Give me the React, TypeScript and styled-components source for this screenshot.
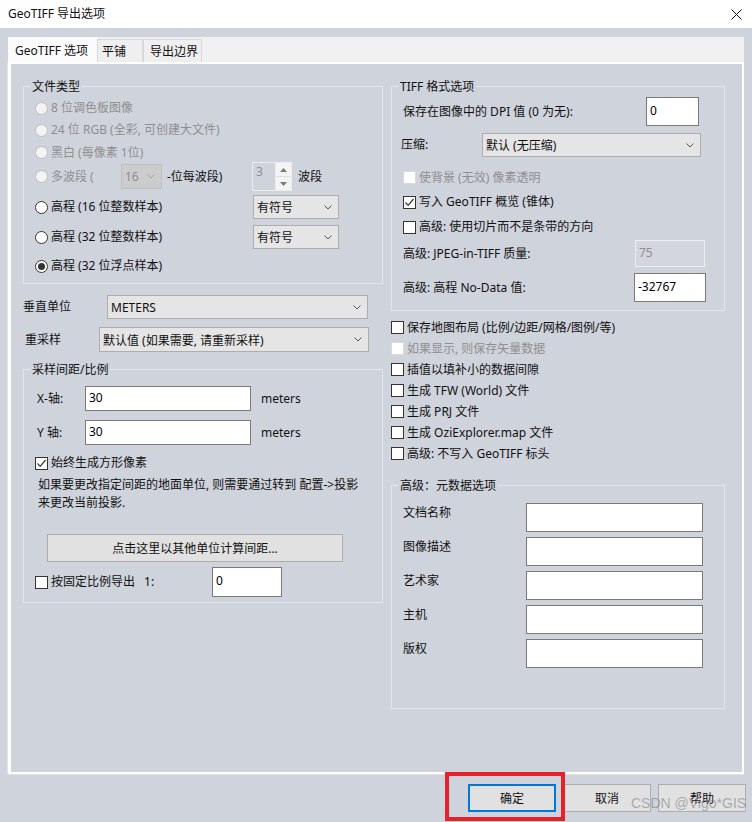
import React from 'react';
import styled, { createGlobalStyle } from 'styled-components';

const BG = '#cfd3dc';

const GlobalStyle = createGlobalStyle`
  html, body { margin: 0; padding: 0; background: ${BG}; }
  body {
    font-family: "Noto Sans", "Noto Sans CJK SC", sans-serif;
    font-size: 12px;
    color: #111;
  }
  * { box-sizing: border-box; }
`;

const Window = styled.div`
  position: relative;
  width: 752px;
  height: 822px;
  background: ${BG};
  display: flex;
  flex-direction: column;
  overflow: hidden;
`;
const TitleBar = styled.div`
  height: 28px;
  flex-shrink: 0;
  background: #fff;
  display: flex;
  align-items: center;
  justify-content: space-between;
  padding: 0 10px 0 8px;
  line-height: 16px;
`;
const Body = styled.div`
  padding: 9px 8px 0 8px;
`;
const TabStrip = styled.div`
  height: 25px;
  display: flex;
  align-items: flex-end;
  background: #f0f0f0;
`;
const Tab = styled.div<{ $w: number; $pl: number; $active?: boolean }>`
  width: ${p => p.$w}px;
  height: ${p => (p.$active ? 25 : 23)}px;
  padding-left: ${p => p.$pl}px;
  display: flex;
  align-items: center;
  background: ${p => (p.$active ? '#fbfbfb' : '#efefef')};
  border: ${p => (p.$active ? 'none' : '1px solid #d9d9d9')};
  border-bottom: none;
  white-space: nowrap;
`;
const Page = styled.div`
  height: 712px;
  border: 2px solid #fff;
  border-left-width: 3px;
  box-shadow: 0 1px 0 #e2e2e2, -1px 0 0 #e2e2e2;
  display: grid;
  grid-template-columns: 360px 334px;
  column-gap: 8px;
  align-items: start;
  padding: 22px 0 0 12px;
`;
const Column = styled.div`
  display: flex;
  flex-direction: column;
`;
const Group = styled.div<{ $mt?: number; $pb?: number }>`
  display: flex;
  flex-direction: column;
  border: 1px solid #e4e6eb;
  margin-top: ${p => p.$mt ?? 0}px;
  padding: 0 0 ${p => p.$pb ?? 0}px 11px;
`;
const Legend = styled.div`
  align-self: flex-start;
  margin: -9px 0 0 -5px;
  padding: 0 2px;
  line-height: 18px;
  background: ${BG};
  white-space: nowrap;
`;
const Row = styled.div<{ $h?: number; $mt?: number; $ml?: number; $top?: boolean }>`
  display: flex;
  align-items: ${p => (p.$top ? 'flex-start' : 'center')};
  flex-shrink: 0;
  height: ${p => (p.$h ? `${p.$h}px` : 'auto')};
  margin-top: ${p => p.$mt ?? 0}px;
  margin-left: ${p => p.$ml ?? 0}px;
  white-space: nowrap;
`;
const Cell = styled.span<{ $w?: number; $ml?: number; $off?: boolean; $lh?: number }>`
  display: inline-flex;
  align-items: center;
  flex-shrink: 0;
  width: ${p => (p.$w ? `${p.$w}px` : 'auto')};
  margin-left: ${p => p.$ml ?? 0}px;
  color: ${p => (p.$off ? '#8f8f8f' : '#111')};
  line-height: ${p => p.$lh ?? 16}px;
`;
const RadioDot = styled.span<{ $on?: boolean; $off?: boolean }>`
  width: 13px;
  height: 13px;
  border-radius: 50%;
  border: 1px solid ${p => (p.$off ? '#bdbdbd' : '#333')};
  background: ${p => (p.$off ? '#f3f3f3' : '#fff')};
  display: inline-flex;
  align-items: center;
  justify-content: center;
  margin-right: 3px;
  flex-shrink: 0;
  &::after {
    content: '';
    display: ${p => (p.$on ? 'block' : 'none')};
    width: 7px;
    height: 7px;
    border-radius: 50%;
    background: #333;
  }
`;
const CheckBox = styled.span<{ $off?: boolean }>`
  width: 13px;
  height: 13px;
  border: 1px solid ${p => (p.$off ? '#dadada' : '#333')};
  background: #fff;
  margin-right: 3px;
  flex-shrink: 0;
  display: inline-flex;
  align-items: center;
  justify-content: center;
`;
const Combo = styled.div<{ $w: number; $h?: number; $off?: boolean }>`
  width: ${p => p.$w}px;
  height: ${p => p.$h ?? 24}px;
  flex-shrink: 0;
  display: flex;
  align-items: center;
  justify-content: space-between;
  padding: 0 6px 0 3px;
  background: ${p => (p.$off ? '#cccccc' : '#e5e5e5')};
  border: 1px solid ${p => (p.$off ? '#bfbfbf' : '#adadad')};
  color: ${p => (p.$off ? '#8f8f8f' : '#111')};
`;
const TextBox = styled.input<{ $w: number; $h: number; $off?: boolean }>`
  width: ${p => p.$w}px;
  height: ${p => p.$h}px;
  flex-shrink: 0;
  margin: 0;
  padding: 0 0 3px 3px;
  font: inherit;
  color: ${p => (p.$off ? '#8f8f8f' : '#000')};
  background: ${p => (p.$off ? '#d3d6de' : '#fff')};
  border: 1px solid ${p => (p.$off ? '#eeeeee' : '#7a7a7a')};
  outline: none;
`;
const Spin = styled.div`
  width: 40px;
  height: 29px;
  flex-shrink: 0;
  display: flex;
  border: 1px solid #ececec;
`;
const SpinText = styled.div`
  flex: 1;
  padding: 1px 0 0 3px;
  color: #8f8f8f;
  line-height: 16px;
`;
const SpinArrows = styled.div`
  width: 16px;
  display: flex;
  flex-direction: column;
  border-left: 1px solid #ececec;
`;
const SpinBtn = styled.div`
  flex: 1;
  display: flex;
  align-items: center;
  justify-content: center;
  background: #f4f4f4;
  & + & { border-top: 1px solid #e0e0e0; }
`;
const Para = styled.div`
  margin: 3px 0 0 3px;
  line-height: 18px;
  white-space: nowrap;
`;
const PushButton = styled.div<{ $w: number; $ml?: number; $mt?: number; $default?: boolean }>`
  width: ${p => p.$w}px;
  height: 28px;
  margin-left: ${p => p.$ml ?? 0}px;
  margin-top: ${p => p.$mt ?? 0}px;
  flex-shrink: 0;
  display: flex;
  align-items: center;
  justify-content: center;
  background: #e1e1e1;
  border: ${p => (p.$default ? '2px solid #0078d7' : '1px solid #adadad')};
`;
const Footer = styled.div`
  display: flex;
  justify-content: flex-end;
  gap: 7px;
  padding: 10px 6px 0 0;
`;
const Highlight = styled.div`
  position: absolute;
  left: 445px;
  top: 772px;
  width: 120px;
  height: 49px;
  border: 4px solid #e8202a;
  pointer-events: none;
`;
const Watermark = styled.div`
  position: absolute;
  left: 631px;
  top: 795px;
  font-family: "Liberation Sans", Arial, sans-serif;
  font-size: 14px;
  color: rgba(110, 110, 120, 0.5);
  white-space: nowrap;
  pointer-events: none;
`;

const Chevron = ({ off }: { off?: boolean }) => (
  <svg width="8" height="5" viewBox="0 0 8 5">
    <path d="M0.5 0.5 L4 4 L7.5 0.5" fill="none" stroke={off ? '#a5a5a5' : '#555'} strokeWidth="1" />
  </svg>
);

const Tick = () => (
  <svg width="11" height="11" viewBox="0 0 11 11">
    <path d="M1.5 5.5 L4.2 8.3 L9.5 2" fill="none" stroke="#333" strokeWidth="1.2" />
  </svg>
);

const Radio = ({ label, on, off, w }: { label: string; on?: boolean; off?: boolean; w?: number }) => (
  <Cell $w={w} $off={off}>
    <RadioDot $on={on} $off={off} />
    {label}
  </Cell>
);

const Check = ({ label, on, off }: { label: string; on?: boolean; off?: boolean }) => (
  <Cell $off={off}>
    <CheckBox $off={off}>{on && <Tick />}</CheckBox>
    {label}
  </Cell>
);

const Select = ({ value, w, h, off }: { value: string; w: number; h?: number; off?: boolean }) => (
  <Combo $w={w} $h={h} $off={off}>
    <span>{value}</span>
    <Chevron off={off} />
  </Combo>
);

const metaFields = ['文档名称', '图像描述', '艺术家', '主机', '版权'];
const outputChecks = [
  { label: '保存地图布局 (比例/边距/网格/图例/等)' },
  { label: '如果显示, 则保存矢量数据', off: true },
  { label: '插值以填补小的数据间隙' },
  { label: '生成 TFW (World) 文件' },
  { label: '生成 PRJ 文件' },
  { label: '生成 OziExplorer.map 文件' },
  { label: '高级: 不写入 GeoTIFF 标头' },
];

export default function App() {
  return (
    <Window>
      <GlobalStyle />
      <TitleBar>
        <span>GeoTIFF 导出选项</span>
        <svg width="11" height="11" viewBox="0 0 11 11">
          <path d="M0.5 0.5 L10.5 10.5 M10.5 0.5 L0.5 10.5" stroke="#111" strokeWidth="1" />
        </svg>
      </TitleBar>
      <Body>
        <TabStrip>
          <Tab $w={89} $pl={7} $active>GeoTIFF 选项</Tab>
          <Tab $w={46} $pl={4}>平铺</Tab>
          <Tab $w={59} $pl={6}>导出边界</Tab>
        </TabStrip>
        <Page>
          <Column>
            <Group>
              <Legend>文件类型</Legend>
              <Row $h={22} $mt={1}><Radio label="8 位调色板图像" off /></Row>
              <Row $h={22}><Radio label="24 位 RGB (全彩, 可创建大文件)" off /></Row>
              <Row $h={23}><Radio label="黑白 (每像素 1位)" off /></Row>
              <Row $h={25}>
                <Radio label="多波段 (" off w={86} />
                <Select value="16" w={41} h={25} off />
                <Cell $w={85} $ml={5}>-位每波段)</Cell>
                <Spin>
                  <SpinText>3</SpinText>
                  <SpinArrows>
                    <SpinBtn>
                      <svg width="7" height="4" viewBox="0 0 7 4"><path d="M0 4 L3.5 0 L7 4 Z" fill="#7a7a7a" /></svg>
                    </SpinBtn>
                    <SpinBtn>
                      <svg width="7" height="4" viewBox="0 0 7 4"><path d="M0 0 L3.5 4 L7 0 Z" fill="#7a7a7a" /></svg>
                    </SpinBtn>
                  </SpinArrows>
                </Spin>
                <Cell $ml={6}>波段</Cell>
              </Row>
              <Row $h={36}>
                <Radio label="高程 (16 位整数样本)" w={218} />
                <Select value="有符号" w={86} />
              </Row>
              <Row $h={24}>
                <Radio label="高程 (32 位整数样本)" w={218} />
                <Select value="有符号" w={86} />
              </Row>
              <Row $h={34}><Radio label="高程 (32 位浮点样本)" on /></Row>
            </Group>

            <Row $h={24} $mt={11}>
              <Cell $w={84}>垂直单位</Cell>
              <Select value="METERS" w={261} />
            </Row>
            <Row $h={25} $mt={8} $ml={2}>
              <Cell $w={74}>重采样</Cell>
              <Select value="默认值 (如果需要, 请重新采样)" w={270} h={25} />
            </Row>

            <Group $mt={17} $pb={5}>
              <Legend>采样间距/比例</Legend>
              <Row $h={25} $mt={7} $ml={2}>
                <Cell $w={48}>X-轴:</Cell>
                <TextBox $w={166} $h={25} defaultValue="30" readOnly />
                <Cell $ml={10}>meters</Cell>
              </Row>
              <Row $h={25} $mt={9} $ml={2}>
                <Cell $w={48}>Y 轴:</Cell>
                <TextBox $w={166} $h={25} defaultValue="30" readOnly />
                <Cell $ml={10}>meters</Cell>
              </Row>
              <Row $h={20} $mt={8}><Check label="始终生成方形像素" on /></Row>
              <Para>
                如果要更改指定间距的地面单位, 则需要通过转到 配置-&gt;投影
                <br />
                来更改当前投影.
              </Para>
              <PushButton $w={296} $ml={12} $mt={22}>点击这里以其他单位计算间距...</PushButton>
              <Row $h={30} $mt={5}>
                <Cell $w={177}>
                  <CheckBox />
                  按固定比例导出<Cell $ml={9}>1:</Cell>
                </Cell>
                <TextBox $w={70} $h={30} defaultValue="0" readOnly />
              </Row>
            </Group>
          </Column>

          <Column>
            <Group $pb={8}>
              <Legend>TIFF 格式选项</Legend>
              <Row $h={29} $mt={1}>
                <Cell $w={243}>保存在图像中的 DPI 值 (0 为无):</Cell>
                <TextBox $w={53} $h={29} defaultValue="0" readOnly />
              </Row>
              <Row $h={24} $mt={7} $ml={-2}>
                <Cell $w={81}>压缩:</Cell>
                <Select value="默认 (无压缩)" w={219} />
              </Row>
              <Row $h={25} $mt={8}><Check label="使背景 (无效) 像素透明" off /></Row>
              <Row $h={24}><Check label="写入 GeoTIFF 概览 (锥体)" on /></Row>
              <Row $h={26}><Check label="高级: 使用切片而不是条带的方向" /></Row>
              <Row $h={27}>
                <Cell $w={232}>高级: JPEG-in-TIFF 质量:</Cell>
                <TextBox $w={70} $h={27} defaultValue="75" readOnly $off />
              </Row>
              <Row $h={29} $mt={6}>
                <Cell $w={231}>高级: 高程 No-Data 值:</Cell>
                <TextBox $w={72} $h={29} defaultValue="-32767" readOnly />
              </Row>
            </Group>

            <Row $h={6} />
            {outputChecks.map(c => (
              <Row key={c.label} $h={21}>
                <Check label={c.label} off={c.off} />
              </Row>
            ))}

            <Group $mt={21} $pb={40}>
              <Legend>高级：元数据选项</Legend>
              {metaFields.map((f, i) => (
                <Row key={f} $h={29} $mt={i === 0 ? 8 : 5} $top>
                  <Cell $w={123} $lh={20}>{f}</Cell>
                  <TextBox $w={177} $h={29} readOnly />
                </Row>
              ))}
            </Group>
          </Column>
        </Page>
      </Body>
      <Footer>
        <PushButton $w={88} $default>确定</PushButton>
        <PushButton $w={88}>取消</PushButton>
        <PushButton $w={88}>帮助</PushButton>
      </Footer>
      <Highlight />
      <Watermark>CSDN @Vigo*GIS</Watermark>
    </Window>
  );
}
